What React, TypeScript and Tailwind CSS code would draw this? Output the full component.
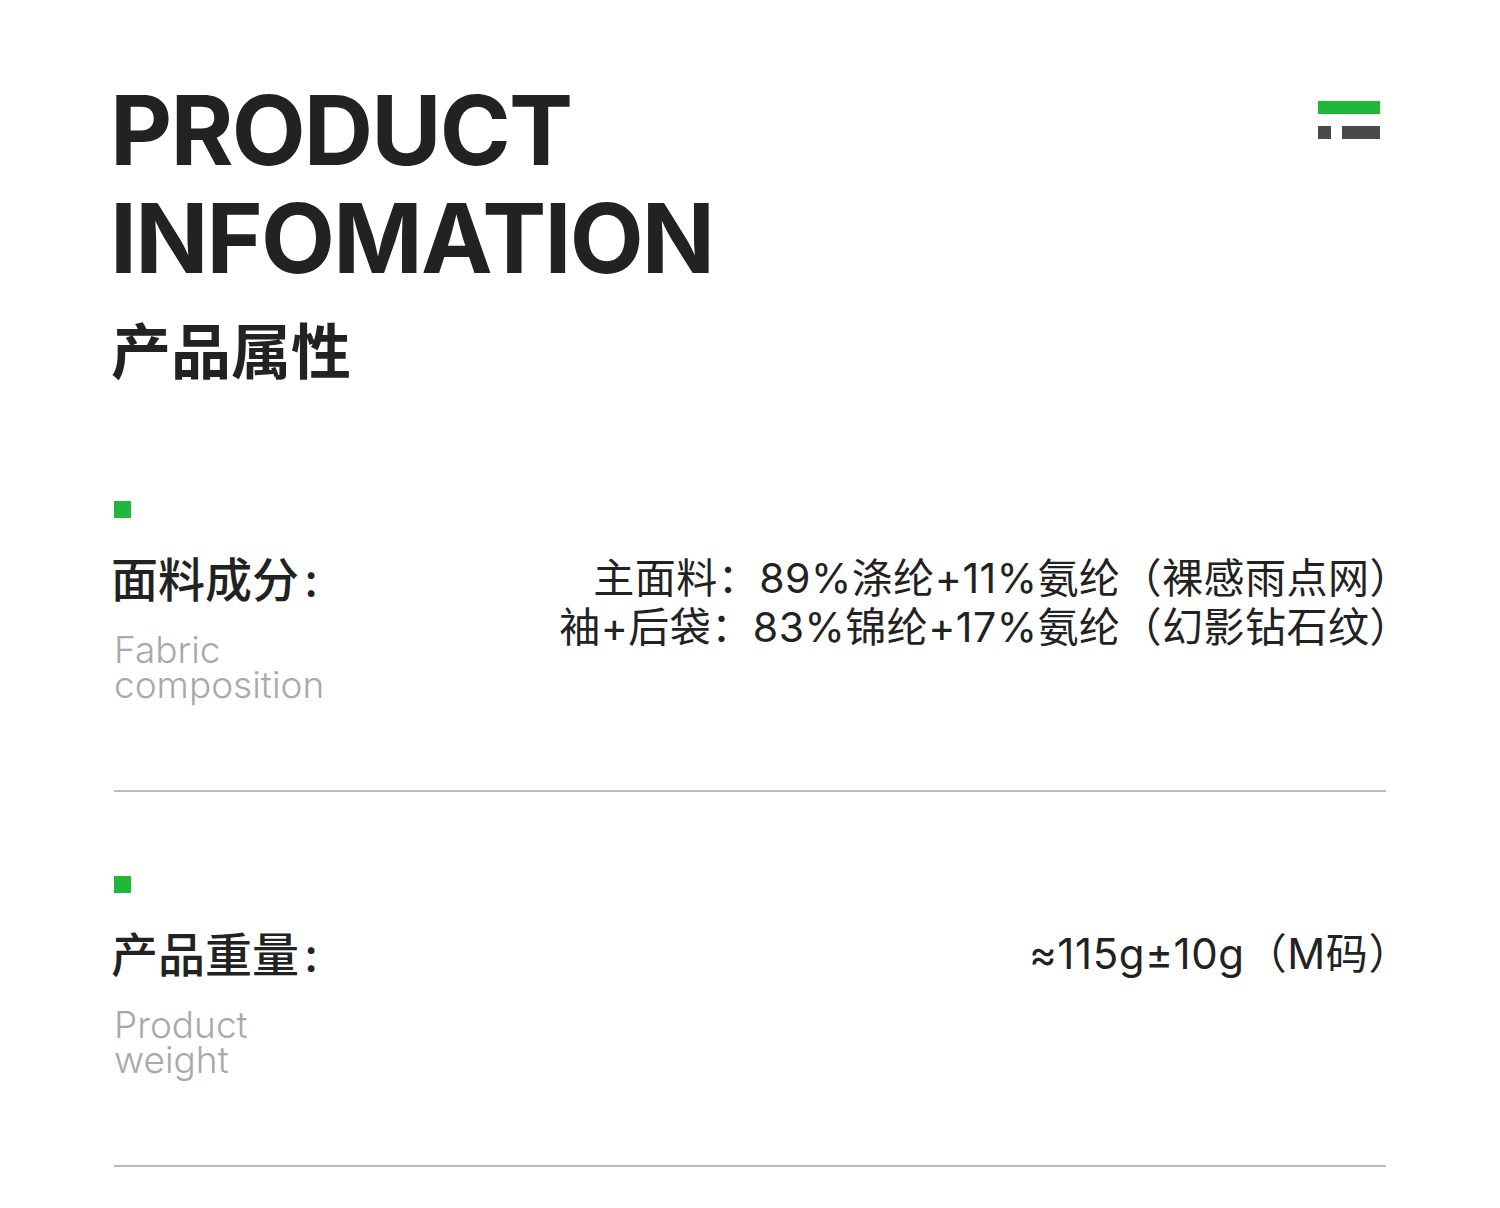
import React from 'react';

const cjk = { fontFamily: 'Inter, "Noto Sans CJK SC", sans-serif' };

const Logo: React.FC = () => (
  <div className="mt-[25px] mr-[6px] flex flex-col gap-[12px]">
    <div className="h-[13px] w-[62px] bg-[#1fb83b]" />
    <div className="flex gap-[11px]">
      <div className="h-[13px] w-[13px] bg-[#4a4a4a]" />
      <div className="h-[13px] w-[38px] bg-[#4a4a4a]" />
    </div>
  </div>
);

interface SectionProps {
  title: string;
  en: string[];
  lines: string[];
  valueClass: string;
}

const Section: React.FC<SectionProps> = ({ title, en, lines, valueClass }) => (
  <div>
    <div className="h-[17px] w-[17px] bg-[#1fb83b]" />
    <div className="mt-[39px] flex items-start justify-between">
      <div>
        <div className="-ml-[3px] text-[47px] leading-[46px] font-medium text-[#222]" style={cjk}>
          {title}
          <span className="ml-[5px]">:</span>
        </div>
        <div className="mt-[29px] text-[37px] leading-[35px] font-light text-[#a9a9a9]" style={cjk}>
          {en.map(t => (
            <div key={t}>{t}</div>
          ))}
        </div>
      </div>
      <div className={`-mt-[3px] -mr-[25px] text-right leading-[49px] text-[#222] ${valueClass}`} style={cjk}>
        {lines.map(l => (
          <div key={l}>{l}</div>
        ))}
      </div>
    </div>
    <div className="mt-[88px] h-[2px] bg-[#bcbcbc]" />
  </div>
);

export default function App() {
  return (
    <div className="w-[1500px] h-[1208px] bg-white px-[114px] pt-[76px]">
      <div className="flex items-start justify-between">
        <h1
          className="-ml-[4px] text-[96px] leading-[108px] font-bold tracking-[-1.8px] text-[#222]"
          style={{ fontFamily: 'Inter, "Liberation Sans", sans-serif' }}
        >
          PRODUCT
          <br />
          INFOMATION
        </h1>
        <Logo />
      </div>
      <div
        className="-ml-[3px] mt-[26px] text-[60px] leading-[60px] font-bold text-[#222]"
        style={{ fontFamily: '"Noto Sans CJK SC", sans-serif' }}
      >
        产品属性
      </div>

      <div className="mt-[123px]">
        <Section
          title="面料成分"
          en={['Fabric', 'composition']}
          lines={['主面料：89%涤纶+11%氨纶（裸感雨点网）', '袖+后袋：83%锦纶+17%氨纶（幻影钻石纹）']}
          valueClass="text-[41px] tracking-[0.5px]"
        />
      </div>
      <div className="mt-[84px]">
        <Section
          title="产品重量"
          en={['Product', 'weight']}
          lines={['≈115g±10g（M码）']}
          valueClass="text-[42px] tracking-[0.6px]"
        />
      </div>
    </div>
  );
}
